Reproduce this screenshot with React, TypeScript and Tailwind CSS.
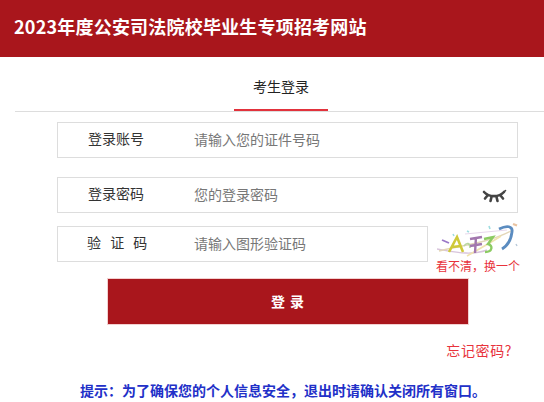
const FONT = "font-['Noto_Sans_CJK_SC','Liberation_Sans',sans-serif]";

function EyeClosed() {
  return (
    <svg width="26" height="16" viewBox="0 0 26 16" fill="none" stroke="#444" strokeWidth="2.6" strokeLinecap="round">
      <path d="M3 3 C8 8.5 18 8.5 23 3" />
      <path d="M6.5 6.5 L4 9.5" />
      <path d="M10.5 8 L9.5 12" />
      <path d="M15.5 8 L16.5 12" />
      <path d="M19.5 6.5 L22 9.5" />
      <path d="M23 3 L24.5 1.5" strokeWidth="1.6" />
    </svg>
  );
}

function Captcha() {
  return (
    <svg width="81" height="36" viewBox="0 0 81 36" fill="none" className="blur-[0.3px]">
      <path d="M0 27 C18 30 34 34 50 28" stroke="#d8c4dc" strokeWidth="1.4" />
      <path d="M2 29 C20 24 50 22 76 8" stroke="#e3d6b8" strokeWidth="1.4" />
      <path d="M30 34 C44 26 58 18 64 14" stroke="#f0e3b0" strokeWidth="1.6" />
      <path d="M28 12 L70 8" stroke="#e8d8ec" strokeWidth="1.2" />
      <path d="M5 18 L12 21" stroke="#9a78c8" strokeWidth="1.8" />
      <path d="M12 30 L20 15 L26 30 M15 25 L24 24" stroke="#cfc93a" strokeWidth="2.6" />
      <path d="M27 24 C30 20 33 21 33 26" stroke="#b8d8a0" strokeWidth="1.6" />
      <path d="M33 17 L45 15 M39 15 L38 31 M33 24 L45 22" stroke="#a276ae" strokeWidth="2.4" />
      <path d="M47 17 L56 15 L51 22 C56 23 56 30 48 30" stroke="#8ccb62" strokeWidth="2.4" />
      <path d="M62 7 C70 3 76 4 75 10 C74 18 70 24 65 27" stroke="#5b8cc0" strokeWidth="2.8" />
      <path d="M52 4 L53 7 M30 9 L32 10 M16 12 L17 14" stroke="#9fdde0" strokeWidth="1.6" />
      <path d="M76 2 L80 3.5" stroke="#eac3a0" strokeWidth="2.4" />
      <path d="M79 22 L80 24" stroke="#b8c8d8" strokeWidth="1.4" />
    </svg>
  );
}

function Field({ label, placeholder, wide, labelClass, children }: { label: string; placeholder: string; wide?: boolean; labelClass?: string; children?: React.ReactNode }) {
  return (
    <div className={`flex h-9 items-center border border-[#ddd] ${wide ? 'w-[461px]' : 'w-[371px]'}`}>
      <span className={`w-[136px] shrink-0 whitespace-pre pb-[5px] text-sm text-[#333] ${labelClass ?? 'pl-[30px]'}`}>{label}</span>
      <span className="flex-1 pb-[3px] text-sm text-[#777]">{placeholder}</span>
      {children}
    </div>
  );
}

export default function App() {
  return (
    <div className={`h-[402px] w-[544px] overflow-hidden bg-white ${FONT}`}>
      <header className="flex h-[57px] items-center bg-[#a9161c] pb-[5px] pl-[14px]">
        <h1 className="text-lg font-bold tracking-[0.2px] text-white">2023年度公安司法院校毕业生专项招考网站</h1>
      </header>

      {/* Tab */}
      <div className="ml-[15px] h-[55px] border-b border-[#ddd]">
        <div className="ml-[219px] flex h-[54px] w-[94px] items-center justify-center border-b-2 border-[#e2323c] pt-[6px] text-sm text-[#222]">
          考生登录
        </div>
      </div>

      <form className="pl-[57px] pt-[10px]">
        <Field label="登录账号" placeholder="请输入您的证件号码" wide />
        <div className="mt-[19px]">
          <Field label="登录密码" placeholder="您的登录密码" wide>
            <span className="mr-[10px] mt-[3px] flex">
              <EyeClosed />
            </span>
          </Field>
        </div>
        <div className="mt-[13px] flex h-9">
          <Field label="验 证 码" placeholder="请输入图形验证码" labelClass="pl-[29px] [word-spacing:6px]" />
          <div className="ml-[9px] -mt-[4px] w-[85px] shrink-0">
            <Captcha />
            <a className="-ml-px block whitespace-nowrap text-xs leading-[15px] text-[#e8333c]">看不清，换一个</a>
          </div>
        </div>
      </form>

      <button className="ml-[107px] mt-[16px] h-[47px] w-[362px] border border-[#f3d0d0] bg-[#a9161c] pb-[2px] text-sm font-bold tracking-[1px] text-white">
        登 录
      </button>

      <div className="mt-[17px] pr-[32px] text-right text-sm leading-[16px] tracking-[0.6px] text-[#e8333c]">忘记密码?</div>

      <p className="mt-[24px] pl-[80px] text-sm font-bold leading-4 text-[#2230c8]">
        提示：为了确保您的个人信息安全，退出时请确认关闭所有窗口。
      </p>
    </div>
  );
}
